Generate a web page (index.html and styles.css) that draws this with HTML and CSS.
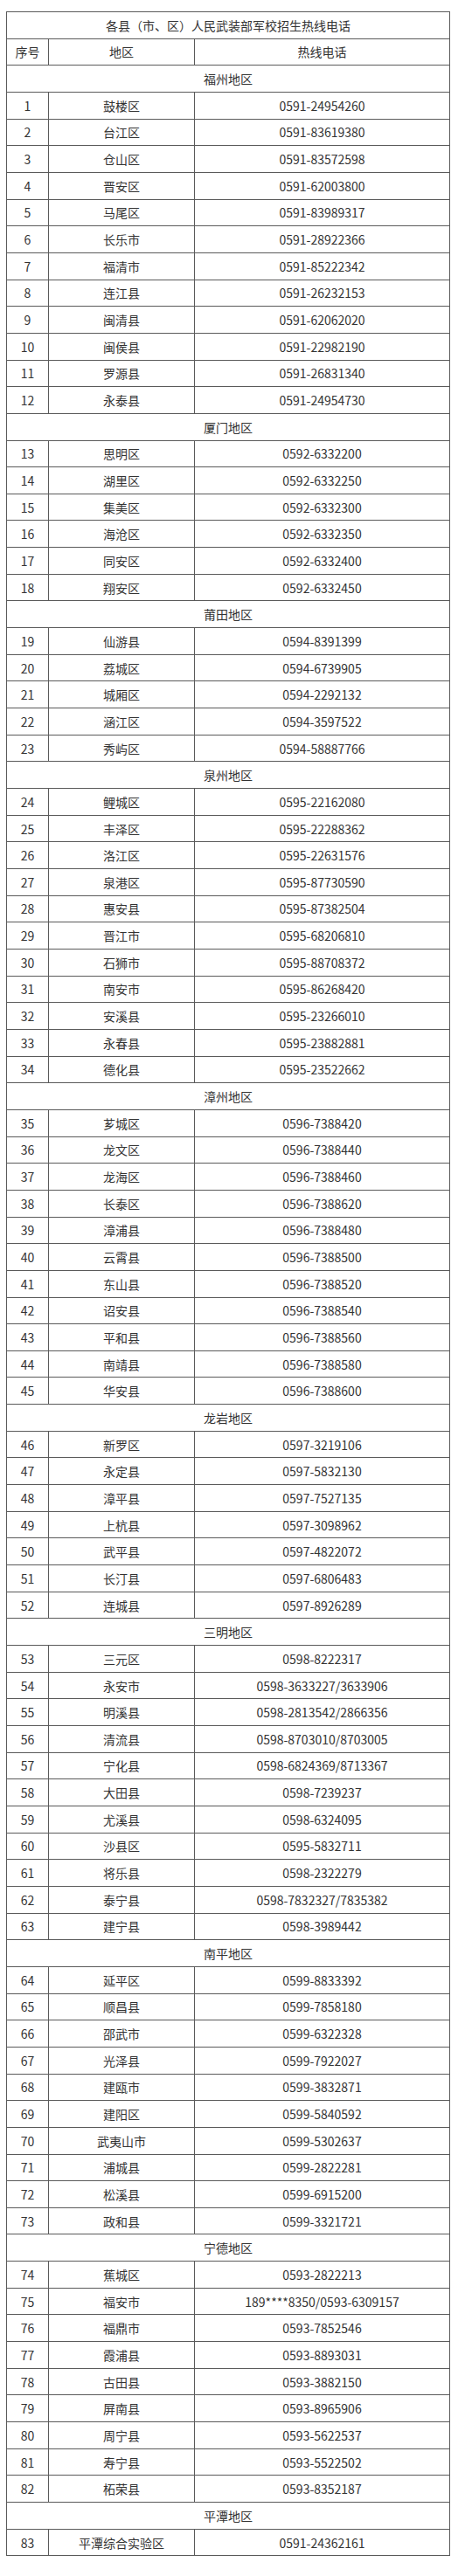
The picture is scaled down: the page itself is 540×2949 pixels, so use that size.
FILE: index.html
```html
<!DOCTYPE html>
<html lang="zh-CN">
<head>
<meta charset="utf-8">
<title>各县（市、区）人民武装部军校招生热线电话</title>
<link rel="stylesheet" href="styles.css">
</head>
<body>
<div class="wrap">
<table class="hotline">
<colgroup><col class="c-no"><col class="c-area"><col class="c-tel"></colgroup>
<tbody>
<tr><td colspan="3">各县（市、区）人民武装部军校招生热线电话</td></tr>
<tr><td>序号</td><td>地区</td><td>热线电话</td></tr>
<tr><td colspan="3">福州地区</td></tr>
<tr><td>1</td><td>鼓楼区</td><td>0591-24954260</td></tr>
<tr><td>2</td><td>台江区</td><td>0591-83619380</td></tr>
<tr><td>3</td><td>仓山区</td><td>0591-83572598</td></tr>
<tr><td>4</td><td>晋安区</td><td>0591-62003800</td></tr>
<tr><td>5</td><td>马尾区</td><td>0591-83989317</td></tr>
<tr><td>6</td><td>长乐市</td><td>0591-28922366</td></tr>
<tr><td>7</td><td>福清市</td><td>0591-85222342</td></tr>
<tr><td>8</td><td>连江县</td><td>0591-26232153</td></tr>
<tr><td>9</td><td>闽清县</td><td>0591-62062020</td></tr>
<tr><td>10</td><td>闽侯县</td><td>0591-22982190</td></tr>
<tr><td>11</td><td>罗源县</td><td>0591-26831340</td></tr>
<tr><td>12</td><td>永泰县</td><td>0591-24954730</td></tr>
<tr><td colspan="3">厦门地区</td></tr>
<tr><td>13</td><td>思明区</td><td>0592-6332200</td></tr>
<tr><td>14</td><td>湖里区</td><td>0592-6332250</td></tr>
<tr><td>15</td><td>集美区</td><td>0592-6332300</td></tr>
<tr><td>16</td><td>海沧区</td><td>0592-6332350</td></tr>
<tr><td>17</td><td>同安区</td><td>0592-6332400</td></tr>
<tr><td>18</td><td>翔安区</td><td>0592-6332450</td></tr>
<tr><td colspan="3">莆田地区</td></tr>
<tr><td>19</td><td>仙游县</td><td>0594-8391399</td></tr>
<tr><td>20</td><td>荔城区</td><td>0594-6739905</td></tr>
<tr><td>21</td><td>城厢区</td><td>0594-2292132</td></tr>
<tr><td>22</td><td>涵江区</td><td>0594-3597522</td></tr>
<tr><td>23</td><td>秀屿区</td><td>0594-58887766</td></tr>
<tr><td colspan="3">泉州地区</td></tr>
<tr><td>24</td><td>鲤城区</td><td>0595-22162080</td></tr>
<tr><td>25</td><td>丰泽区</td><td>0595-22288362</td></tr>
<tr><td>26</td><td>洛江区</td><td>0595-22631576</td></tr>
<tr><td>27</td><td>泉港区</td><td>0595-87730590</td></tr>
<tr><td>28</td><td>惠安县</td><td>0595-87382504</td></tr>
<tr><td>29</td><td>晋江市</td><td>0595-68206810</td></tr>
<tr><td>30</td><td>石狮市</td><td>0595-88708372</td></tr>
<tr><td>31</td><td>南安市</td><td>0595-86268420</td></tr>
<tr><td>32</td><td>安溪县</td><td>0595-23266010</td></tr>
<tr><td>33</td><td>永春县</td><td>0595-23882881</td></tr>
<tr><td>34</td><td>德化县</td><td>0595-23522662</td></tr>
<tr><td colspan="3">漳州地区</td></tr>
<tr><td>35</td><td>芗城区</td><td>0596-7388420</td></tr>
<tr><td>36</td><td>龙文区</td><td>0596-7388440</td></tr>
<tr><td>37</td><td>龙海区</td><td>0596-7388460</td></tr>
<tr><td>38</td><td>长泰区</td><td>0596-7388620</td></tr>
<tr><td>39</td><td>漳浦县</td><td>0596-7388480</td></tr>
<tr><td>40</td><td>云霄县</td><td>0596-7388500</td></tr>
<tr><td>41</td><td>东山县</td><td>0596-7388520</td></tr>
<tr><td>42</td><td>诏安县</td><td>0596-7388540</td></tr>
<tr><td>43</td><td>平和县</td><td>0596-7388560</td></tr>
<tr><td>44</td><td>南靖县</td><td>0596-7388580</td></tr>
<tr><td>45</td><td>华安县</td><td>0596-7388600</td></tr>
<tr><td colspan="3">龙岩地区</td></tr>
<tr><td>46</td><td>新罗区</td><td>0597-3219106</td></tr>
<tr><td>47</td><td>永定县</td><td>0597-5832130</td></tr>
<tr><td>48</td><td>漳平县</td><td>0597-7527135</td></tr>
<tr><td>49</td><td>上杭县</td><td>0597-3098962</td></tr>
<tr><td>50</td><td>武平县</td><td>0597-4822072</td></tr>
<tr><td>51</td><td>长汀县</td><td>0597-6806483</td></tr>
<tr><td>52</td><td>连城县</td><td>0597-8926289</td></tr>
<tr><td colspan="3">三明地区</td></tr>
<tr><td>53</td><td>三元区</td><td>0598-8222317</td></tr>
<tr><td>54</td><td>永安市</td><td>0598-3633227/3633906</td></tr>
<tr><td>55</td><td>明溪县</td><td>0598-2813542/2866356</td></tr>
<tr><td>56</td><td>清流县</td><td>0598-8703010/8703005</td></tr>
<tr><td>57</td><td>宁化县</td><td>0598-6824369/8713367</td></tr>
<tr><td>58</td><td>大田县</td><td>0598-7239237</td></tr>
<tr><td>59</td><td>尤溪县</td><td>0598-6324095</td></tr>
<tr><td>60</td><td>沙县区</td><td>0595-5832711</td></tr>
<tr><td>61</td><td>将乐县</td><td>0598-2322279</td></tr>
<tr><td>62</td><td>泰宁县</td><td>0598-7832327/7835382</td></tr>
<tr><td>63</td><td>建宁县</td><td>0598-3989442</td></tr>
<tr><td colspan="3">南平地区</td></tr>
<tr><td>64</td><td>延平区</td><td>0599-8833392</td></tr>
<tr><td>65</td><td>顺昌县</td><td>0599-7858180</td></tr>
<tr><td>66</td><td>邵武市</td><td>0599-6322328</td></tr>
<tr><td>67</td><td>光泽县</td><td>0599-7922027</td></tr>
<tr><td>68</td><td>建瓯市</td><td>0599-3832871</td></tr>
<tr><td>69</td><td>建阳区</td><td>0599-5840592</td></tr>
<tr><td>70</td><td>武夷山市</td><td>0599-5302637</td></tr>
<tr><td>71</td><td>浦城县</td><td>0599-2822281</td></tr>
<tr><td>72</td><td>松溪县</td><td>0599-6915200</td></tr>
<tr><td>73</td><td>政和县</td><td>0599-3321721</td></tr>
<tr><td colspan="3">宁德地区</td></tr>
<tr><td>74</td><td>蕉城区</td><td>0593-2822213</td></tr>
<tr><td>75</td><td>福安市</td><td>189****8350/0593-6309157</td></tr>
<tr><td>76</td><td>福鼎市</td><td>0593-7852546</td></tr>
<tr><td>77</td><td>霞浦县</td><td>0593-8893031</td></tr>
<tr><td>78</td><td>古田县</td><td>0593-3882150</td></tr>
<tr><td>79</td><td>屏南县</td><td>0593-8965906</td></tr>
<tr><td>80</td><td>周宁县</td><td>0593-5622537</td></tr>
<tr><td>81</td><td>寿宁县</td><td>0593-5522502</td></tr>
<tr><td>82</td><td>柘荣县</td><td>0593-8352187</td></tr>
<tr><td colspan="3">平潭地区</td></tr>
<tr><td>83</td><td>平潭综合实验区</td><td>0591-24362161</td></tr>
</tbody>
</table>
</div>
</body>
</html>
```
FILE: styles.css
```css
html, body {
  margin: 0;
  padding: 0;
  background: #fff;
}
.wrap {
  padding: 13px 0 0 7px;
}
.hotline {
  border-collapse: collapse;
  width: 507px;
  table-layout: fixed;
  font-family: "Noto Sans CJK SC", "Microsoft YaHei", sans-serif;
  font-size: 14px;
  color: #333;
}
.c-no { width: 48px; }
.c-area { width: 167px; }
.c-tel { width: 292px; }
.hotline tr {
  height: 30.66px;
}
.hotline td {
  border: 1px solid #5a5a5a;
  text-align: center;
  vertical-align: middle;
  padding: 0 2px;
  line-height: 18px;
  white-space: nowrap;
}
```
